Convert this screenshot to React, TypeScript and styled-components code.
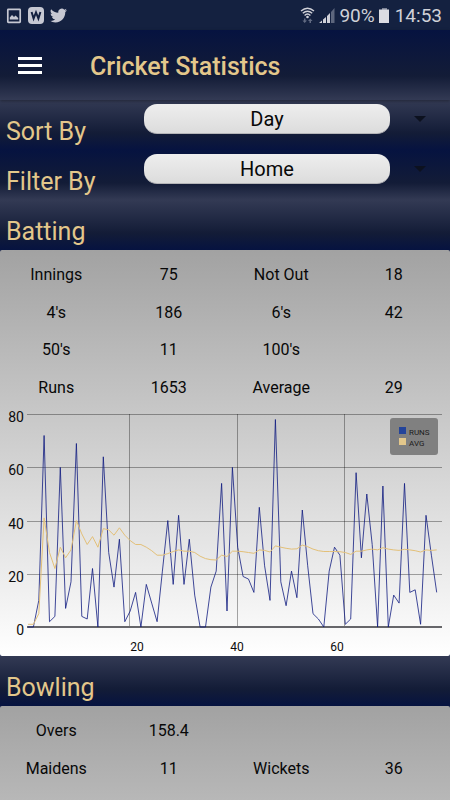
import React from "react";
import styled, { createGlobalStyle } from "styled-components";

const Global = createGlobalStyle`
  * { box-sizing: border-box; }
  html, body, #root { height: 100%; margin: 0; }
  body { font-family: Roboto, "Liberation Sans", sans-serif; background: #0a1642; color: #080808; }
`;

const GOLD = "#e3c78b";
const FADE_IN = "linear-gradient(to bottom, #333a54 0%, #131c37 66%, #061340 100%)";
const FADE_OUT = "linear-gradient(to bottom, #061340 0%, #131c37 66%, #333a54 100%)";

const Screen = styled.div`
  display: flex;
  flex-direction: column;
  height: 100vh;
  overflow: hidden;
`;

const StatusBar = styled.div`
  flex: none;
  display: flex;
  align-items: center;
  justify-content: space-between;
  height: 30px;
  padding: 1px 8px 0 6px;
  background: #142140;
  color: #d0d1d8;
  font-size: 19px;
`;

const StatusGroup = styled.div<{ $gap: number }>`
  display: flex;
  align-items: center;
  gap: ${(p) => p.$gap}px;
  svg { display: block; }
`;

const Clock = styled.span`
  margin-left: 2px;
`;

const AppBar = styled.header`
  flex: none;
  display: flex;
  align-items: center;
  gap: 48px;
  height: 70px;
  padding: 0 18px;
  background: ${FADE_OUT};
  box-shadow: 0 1px 3px rgba(0, 0, 0, 0.35);
  z-index: 1;
`;

const MenuButton = styled.button`
  display: block;
  padding: 0;
  border: 0;
  background: none;
  cursor: pointer;
  svg { display: block; }
`;

const Title = styled.h1`
  margin: 0;
  padding-top: 2px;
  color: ${GOLD};
  font-size: 25px;
  font-weight: 500;
`;

const Content = styled.main`
  flex: 1;
  min-height: 0;
  overflow-y: auto;
  scrollbar-width: none;
`;

const FieldRow = styled.div<{ $fade: string }>`
  display: grid;
  grid-template-columns: 138px 1fr 60px;
  align-items: start;
  height: 50px;
  padding: 4px 0 0 6px;
  background: ${(p) => p.$fade};
`;

const FieldLabel = styled.label`
  padding-top: 12px;
  color: ${GOLD};
  font-size: 25px;
  line-height: 32px;
`;

const Picker = styled.select`
  appearance: none;
  width: 100%;
  height: 30px;
  padding: 0;
  border: 0;
  border-bottom: 1px solid #b5b5b8;
  border-radius: 13px;
  background: linear-gradient(to bottom, #eeeeee, #dcdcdc);
  color: #080808;
  font-family: inherit;
  font-size: 20px;
  text-align: center;
  text-align-last: center;
`;

const Arrow = styled.svg`
  display: block;
  justify-self: center;
  margin-top: 12px;
`;

const SectionTitle = styled.h2`
  height: 50px;
  margin: 0;
  padding: 16px 6px 0;
  background: ${FADE_IN};
  color: ${GOLD};
  font-size: 25px;
  font-weight: 400;
  line-height: 32px;
`;

const Card = styled.section`
  min-height: 406px;
  padding-top: 6px;
  border-radius: 2px;
  background: linear-gradient(to bottom, #a2a2a2, #ffffff);
`;

const StatTable = styled.table<{ $rows: number }>`
  width: 100%;
  height: ${(p) => Math.round(p.$rows * 37.5)}px;
  table-layout: fixed;
  border-collapse: collapse;
  font-size: 16px;
  text-align: center;
  th, td { padding: 0; font-weight: 400; }
`;

const ChartSvg = styled.svg`
  display: block;
  width: 100%;
  font-family: Roboto, sans-serif;
`;

type Pair = [string, string];
const batting: [Pair, Pair][] = [
  [["Innings", "75"], ["Not Out", "18"]],
  [["4's", "186"], ["6's", "42"]],
  [["50's", "11"], ["100's", ""]],
  [["Runs", "1653"], ["Average", "29"]],
];
const bowling: [Pair, Pair][] = [
  [["Overs", "158.4"], ["", ""]],
  [["Maidens", "11"], ["Wickets", "36"]],
  [["Eco", "4.25"], ["S/R", "26.44"]],
];

const runs = [
  0, 0, 10, 72, 2, 4, 60, 7, 17, 69, 4, 3, 22, 0, 64, 28, 15, 33, 2, 6, 13, 0, 16, 9, 2, 21,
  40, 16, 42, 16, 33, 12, 0, 0, 15, 21, 54, 6, 60, 30, 19, 18, 13, 45, 23, 10, 78, 17, 8, 21,
  11, 44, 23, 5, 3, 0, 21, 30, 27, 1, 3, 58, 26, 50, 31, 0, 53, 0, 12, 9, 54, 13, 14, 1, 42,
  27, 13,
];
const averages = [
  1, 1, 5, 41, 28, 22, 30, 26, 29, 40, 35, 31, 34, 30, 37, 36.5, 34.5, 37.3, 34.5, 32.5, 31,
  31, 30, 28.7, 27, 27, 27.6, 28.4, 29, 28.5, 28.5, 28, 26.6, 25.7, 25.3, 25.2, 27, 26.5,
  28.5, 28.5, 28.3, 28, 27.7, 29, 28.8, 28.2, 30.5, 30, 29.6, 29.3, 29.4, 30.8, 30.2, 29.3,
  28.7, 28.4, 28.4, 28.4, 28.3, 28, 27.3, 28.5, 28.5, 29, 29.3, 29, 29.8, 29.3, 29, 28.8,
  29.2, 29, 28.7, 28.2, 29, 28.8, 29,
];

const BASE = 222;
const px = (i: number) => 28 + i * 5.378;
const py = (v: number) => BASE - v * 2.66;
const line = (values: number[]) => values.map((v, i) => `${px(i).toFixed(1)},${py(v).toFixed(1)}`).join(" ");

function Stats({ rows }: { rows: [Pair, Pair][] }) {
  return (
    <StatTable $rows={rows.length}>
      <tbody>
        {rows.map((row, r) => (
          <tr key={r}>
            {row.map(([label, value], c) => (
              <React.Fragment key={c}>
                {label ? <th scope="row">{label}</th> : <td />}
                <td>{value}</td>
              </React.Fragment>
            ))}
          </tr>
        ))}
      </tbody>
    </StatTable>
  );
}

function Chart() {
  return (
    <ChartSvg viewBox="0 1 450 250" role="img" aria-label="Runs and average by innings">
      <g stroke="#000000" strokeOpacity="0.34">
        {[20, 40, 60, 80].map((v) => (
          <line key={v} x1="27" x2="442" y1={Math.round(py(v)) + 0.5} y2={Math.round(py(v)) + 0.5} />
        ))}
        {[129.5, 237.5, 344.5].map((x) => (
          <line key={x} x1={x} x2={x} y1="9" y2={BASE} />
        ))}
      </g>
      <rect x="27" y="221" width="415" height="2" fill="#66666a" />
      <polyline points={line(runs)} fill="none" stroke="#101c80" strokeWidth="0.8" />
      <polyline points={line(averages)} fill="none" stroke="#e3c078" strokeWidth="1" />
      <g fontSize="14" fill="#0c0c0c" textAnchor="end">
        {[0, 20, 40, 60, 80].map((v) => (
          <text key={v} x="24" y={Math.round(py(v)) + 8}>{v}</text>
        ))}
      </g>
      <g fontSize="12" fill="#0c0c0c" textAnchor="middle">
        <text x="137" y="246">20</text>
        <text x="237" y="246">40</text>
        <text x="337" y="246">60</text>
      </g>
      <rect x="390" y="13" width="48" height="37" rx="3" fill="#808080" />
      <rect x="399" y="22" width="7" height="7" fill="#24449a" />
      <rect x="399" y="33" width="7" height="7" fill="#e3c78b" />
      <g fontSize="8" fill="#1c1c1c">
        <text x="409" y="30">RUNS</text>
        <text x="409" y="41">AVG</text>
      </g>
    </ChartSvg>
  );
}

function Field({ id, label, value, options, fade }: { id: string; label: string; value: string; options: string[]; fade: string }) {
  return (
    <FieldRow $fade={fade}>
      <FieldLabel htmlFor={id}>{label}</FieldLabel>
      <Picker id={id} defaultValue={value}>
        {options.map((o) => <option key={o}>{o}</option>)}
      </Picker>
      <Arrow width="12" height="6" viewBox="0 0 12 6" aria-hidden="true">
        <path d="M0 0H12L6 6Z" fill="#0c111f" />
      </Arrow>
    </FieldRow>
  );
}

export default function App() {
  return (
    <Screen>
      <Global />
      <StatusBar>
        <StatusGroup $gap={6}>
          <svg width="16" height="16" viewBox="0 0 16 16">
            <rect x="1.8" y="1.3" width="12.4" height="13" rx="0.6" fill="none" stroke="#c6c8d2" strokeWidth="1.7" />
            <path d="M3.8 11.5V9.5L6 7L8 9L9.5 7.5L12.2 10V11.5Z" fill="#c6c8d2" />
          </svg>
          <svg width="16" height="17" viewBox="0 0 16 17">
            <rect width="16" height="17" rx="4" fill="#c6c8d2" />
            <path d="M3.6 5L5.6 11.5L8 5.5L10.4 11.5L12.4 5" fill="none" stroke="#142140" strokeWidth="2" />
          </svg>
          <svg width="17" height="17" viewBox="0 0 24 24">
            <path fill="#c6c8d2" d="M23.95 4.57a10 10 0 0 1-2.82.77 4.96 4.96 0 0 0 2.16-2.72c-.95.55-2 .96-3.13 1.18a4.92 4.92 0 0 0-8.38 4.48C7.69 8.1 4.07 6.13 1.64 3.16a4.92 4.92 0 0 0 1.52 6.57 4.9 4.9 0 0 1-2.23-.61v.06a4.92 4.92 0 0 0 3.95 4.83 5 5 0 0 1-2.21.08 4.94 4.94 0 0 0 4.6 3.42A9.87 9.87 0 0 1 0 19.54a14 14 0 0 0 7.55 2.21c9.05 0 14-7.5 14-13.98 0-.21 0-.42-.02-.63a9.94 9.94 0 0 0 2.46-2.55z" />
          </svg>
        </StatusGroup>
        <StatusGroup $gap={4}>
          <svg width="15" height="17" viewBox="0 0 15 17">
            <g fill="none" stroke="#d0d1d8" strokeWidth="1.4">
              <path d="M1 4Q7.500-1.500 14 4" />
              <path d="M2.800 6.300Q7.500 2 12.200 6.300" />
              <path d="M4.600 8.500Q7.500 5.700 10.400 8.500" />
            </g>
            <circle cx="7.500" cy="10" r="1.300" fill="#d0d1d8" />
            <path d="M4 11.500H5.500V13.500H7L4.700 16L2.500 13.500H4ZM9.500 16V14H8L10.300 11.500L12.500 14H11V16Z" fill="#626b82" />
          </svg>
          <svg width="16" height="15" viewBox="0 0 16 15">
            <path d="M0 15L3 12.500V15ZM4 11.500L7 9V15H4ZM8 8L11 5V15H8Z" fill="#d0d1d8" />
            <path d="M12 4L15.500 0V15H12Z" fill="#5d667d" />
          </svg>
          <span>90%</span>
          <svg width="10" height="15" viewBox="0 0 10 15">
            <rect x="3" width="5" height="2" fill="#7c8396" />
            <rect y="1.500" width="10" height="13.500" fill="#dcdce2" />
          </svg>
          <Clock>14:53</Clock>
        </StatusGroup>
      </StatusBar>
      <AppBar>
        <MenuButton aria-label="Open menu">
          <svg width="24" height="17" viewBox="0 0 24 17">
            <path d="M0 0H24V3H0ZM0 7H24V10H0ZM0 14H24V17H0Z" fill="#ffffff" />
          </svg>
        </MenuButton>
        <Title>Cricket Statistics</Title>
      </AppBar>
      <Content>
        <Field id="sort" label="Sort By" value="Day" options={["Day", "Month", "Year"]} fade={FADE_IN} />
        <Field id="filter" label="Filter By" value="Home" options={["Home", "Away", "All"]} fade={FADE_OUT} />
        <SectionTitle>Batting</SectionTitle>
        <Card>
          <Stats rows={batting} />
          <Chart />
        </Card>
        <SectionTitle>Bowling</SectionTitle>
        <Card>
          <Stats rows={bowling} />
        </Card>
      </Content>
    </Screen>
  );
}
